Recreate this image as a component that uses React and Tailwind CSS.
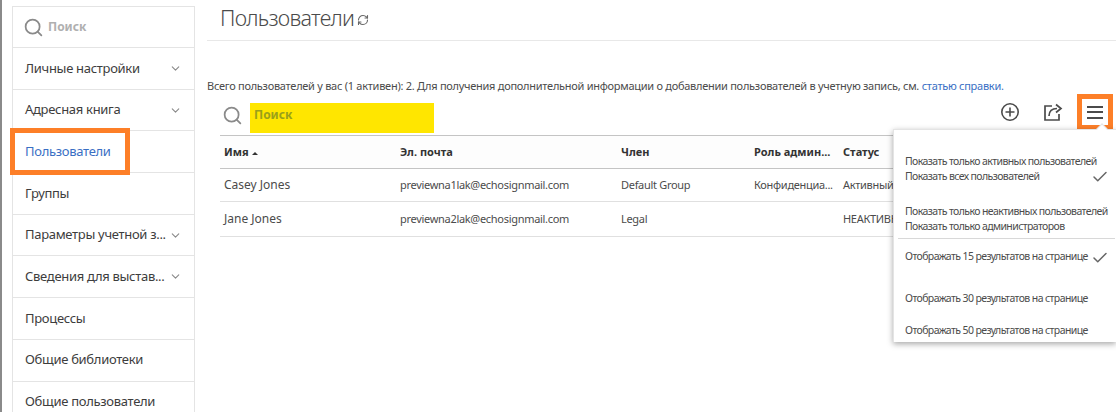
import React from 'react';
import { ChevronDown, Search, RefreshCw, Check } from 'lucide-react';

const navItems = [
  { label: 'Личные настройки', chevron: true },
  { label: 'Адресная книга', chevron: true },
  { label: 'Пользователи', active: true },
  { label: 'Группы' },
  { label: 'Параметры учетной з...', chevron: true },
  { label: 'Сведения для выстав...', chevron: true },
  { label: 'Процессы' },
  { label: 'Общие библиотеки' },
  { label: 'Общие пользователи' },
];

const users = [
  { name: 'Casey Jones', email: 'previewna1lak@echosignmail.com', group: 'Default Group', role: 'Конфиденциа...', status: 'Активный', h: 'h-[33px]' },
  { name: 'Jane Jones', email: 'previewna2lak@echosignmail.com', group: 'Legal', role: '', status: 'НЕАКТИВНЫЙ', h: 'h-[35px]' },
];

const Sidebar = () => (
  <aside className="relative mt-[6px] ml-[10px] w-[183px] shrink-0 border border-[#e4e4e4] self-start">
    <div className="flex items-center h-[41px] pl-[10px] gap-[4px] border-b border-[#e4e4e4]">
      <Search size={21} strokeWidth={2} className="text-[#8a8a8a]" />
      <span className="text-[12px] font-bold text-[#b0b0b0]">Поиск</span>
    </div>
    {navItems.map((item) => (
      <div
        key={item.label}
        className="flex items-center justify-between h-[41.7px] pl-[12px] pr-[12px] border-b border-[#e4e4e4] last:border-b-0"
      >
        <span className={`text-[13px] tracking-[-0.3px] whitespace-nowrap ${item.active ? 'text-[#3a6fc4]' : 'text-[#3d3d3d]'}`}>
          {item.label}
        </span>
        {item.chevron && <ChevronDown size={13} strokeWidth={2} className="text-[#8a8a8a] shrink-0" />}
      </div>
    ))}
    {/* Orange callout */}
    <div className="absolute left-[-3px] top-[121px] w-[120px] h-[47px] border-[5px] border-[#fd7f28]" />
  </aside>
);

const Toolbar = () => (
  <div className="flex items-center h-[33px] ml-[13px] border-b border-[#c4c4c4]">
    <Search size={21} strokeWidth={2} className="ml-[2px] mb-[8px] text-[#8a8a8a] shrink-0" />
    <div className="ml-[7px] w-[184px] h-[30px] -mt-[2px] bg-[#ffe600] pl-[4px] pt-[3px] text-[12px] font-bold text-[#9aa01a]">
      Поиск
    </div>
    <div className="ml-auto flex items-center mb-[14px]">
      <svg width="20" height="20" viewBox="0 0 20 20" fill="none" stroke="#4b4b4b" strokeWidth="1.6" className="mr-[23px]">
        <circle cx="10" cy="10" r="8.2" />
        <path d="M10 5.5v9M5.5 10h9" />
      </svg>
      <svg width="20" height="20" viewBox="0 0 20 20" fill="none" stroke="#4b4b4b" strokeWidth="1.7" className="mr-[14px]">
        <path d="M9 4H2v14h14v-6" />
        <path d="M6 14c0-5 3-7.5 8-7.5M13 2.5l5 4-5 4" />
      </svg>
      {/* Menu button with orange callout */}
      <div className="relative w-[36px] h-[36px] mr-[3px] flex flex-col items-center justify-center gap-[3.5px] border-[5px] border-[#fd7f28]">
        <span className="block w-[16px] h-[2px] bg-[#4b4b4b]" />
        <span className="block w-[16px] h-[2px] bg-[#4b4b4b]" />
        <span className="block w-[16px] h-[2px] bg-[#4b4b4b]" />
      </div>
    </div>
  </div>
);

const UserTable = () => (
  <div className="ml-[13px]">
    <div className="grid grid-cols-[176px_221px_133px_89px_1fr] items-center h-[33px] pl-[4px] bg-[#fdfdfd] border-b border-[#c4c4c4] text-[11px] font-bold text-[#333]">
      <span className="flex items-center gap-[3px]">
        Имя
        <span className="w-0 h-0 mt-[3px] border-x-[3px] border-x-transparent border-b-[3px] border-b-[#333]" />
      </span>
      <span>Эл. почта</span>
      <span>Член</span>
      <span>Роль админ...</span>
      <span>Статус</span>
    </div>
    {users.map((u) => (
      <div
        key={u.name}
        className={`grid grid-cols-[176px_221px_133px_89px_1fr] items-center ${u.h} pl-[4px] border-b border-[#e0e0e0] text-[11px] tracking-[-0.3px] text-[#4b4b4b]`}
      >
        <span className="text-[12px] tracking-normal">{u.name}</span>
        <span>{u.email}</span>
        <span>{u.group}</span>
        <span>{u.role}</span>
        <span className="whitespace-nowrap">{u.status}</span>
      </div>
    ))}
  </div>
);

const menuText = 'text-[10.5px] tracking-[-0.6px] leading-[15px] text-[#4b4b4b] whitespace-nowrap';

const OptionsMenu = () => (
  <div className="absolute right-0 top-[129px] w-[223px] h-[213px] bg-white border-t border-l border-[#e4e4e4] shadow-[0_2px_6px_rgba(0,0,0,0.35)] pl-[11px]">
    <div className="absolute right-[10px] -top-[5px] w-[8px] h-[8px] rotate-45 bg-white border-t border-l border-[#e4e4e4]" />
    <div className="pt-[24px] h-[109px] border-b border-[#d8d8d8] mr-[1px] -ml-[7px] pl-[7px]">
      <p className={menuText}>Показать только активных пользователей</p>
      <div className="flex items-center justify-between h-[15px] pr-[6px]">
        <p className={menuText}>Показать всех пользователей</p>
        <Check size={18} strokeWidth={2} className="text-[#666]" />
      </div>
      <p className={`${menuText} mt-[20px]`}>Показать только неактивных пользователей</p>
      <p className={menuText}>Показать только администраторов</p>
    </div>
    <div className="flex items-center justify-between h-[15px] mt-[10px] pr-[7px]">
      <p className={menuText}>Отображать 15 результатов на странице</p>
      <Check size={18} strokeWidth={2} className="text-[#666] mt-[3px]" />
    </div>
    <p className={`${menuText} mt-[27px]`}>Отображать 30 результатов на странице</p>
    <p className={`${menuText} mt-[17px]`}>Отображать 50 результатов на странице</p>
  </div>
);

export default function App() {
  return (
    <div className="relative flex w-[1116px] h-[412px] overflow-hidden bg-white border-l-2 border-[#8a8a8a] font-['Noto_Sans',sans-serif]">
      <Sidebar />
      <main className="flex-1 min-w-0 ml-[12px]">
        <div className="flex items-center h-[41px] pl-[13px] pb-[4px] border-b border-[#e8e8e8]">
          <h1 className="text-[21.5px] tracking-[-0.7px] font-light text-[#4b4b4b] leading-none">Пользователи</h1>
          <RefreshCw size={12} strokeWidth={2.2} className="ml-[3px] mt-[4px] text-[#666]" />
        </div>
        <p className="mt-[37px] h-[25px] text-[11px] tracking-[-0.27px] leading-[16px] text-[#4b4b4b] whitespace-nowrap">
          Всего пользователей у вас (1 активен): 2. Для получения дополнительной информации о добавлении пользователей в учетную запись, см.{' '}
          <span className="text-[#3a6fc4]">статью справки.</span>
        </p>
        <Toolbar />
        <UserTable />
      </main>
      <OptionsMenu />
    </div>
  );
}
